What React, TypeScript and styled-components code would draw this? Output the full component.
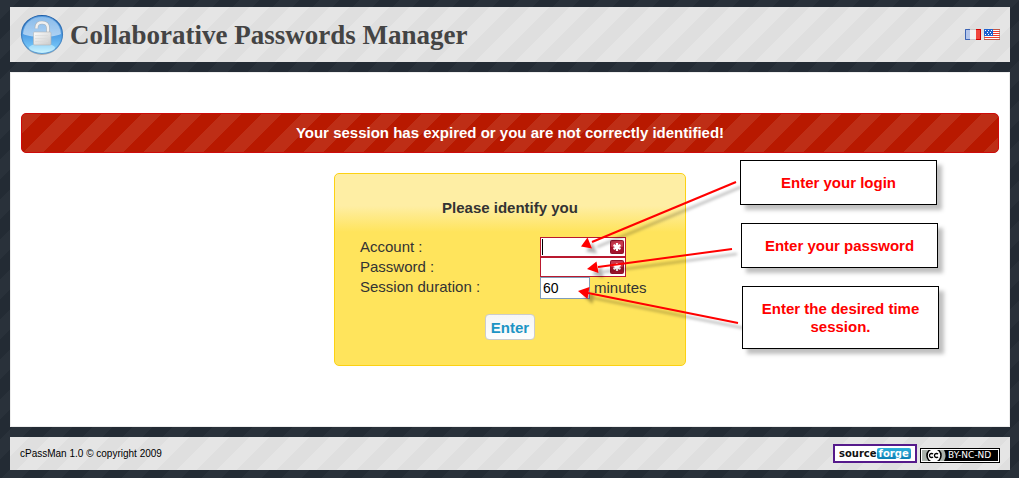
import React from "react";
import styled, { createGlobalStyle, css } from "styled-components";

const stripes = (base: string, band: string) => css`
  background-color: ${base};
  background-image: linear-gradient(
    135deg,
    ${band} 25%,
    ${base} 25%,
    ${base} 50%,
    ${band} 50%,
    ${band} 75%,
    ${base} 75%
  );
  background-size: 40px 40px;
`;

const GlobalStyle = createGlobalStyle`
  * { box-sizing: border-box; }
  html { min-height: 100%; ${stripes("#232b34", "#29313a")} }
  body {
    margin: 0;
    font-family: "Liberation Sans", Arial, sans-serif;
    font-size: 15px;
    line-height: 20px;
    color: #333;
  }
`;

const Page = styled.div`
  display: flex;
  flex-direction: column;
  gap: 10px;
  padding: 7px 9px 8px 10px;
`;

const Bar = styled.div`
  ${stripes("#dfdfdf", "#e5e5e5")}
  display: flex;
  align-items: center;
  justify-content: space-between;
  padding: 0 10px;
`;

const Header = styled(Bar).attrs({ as: "header" })`
  min-height: 55px;
`;

const Footer = styled(Bar).attrs({ as: "footer" })`
  min-height: 33px;
  color: #000;
  font-size: 10px;
`;

const Brand = styled.div`
  display: flex;
  align-items: center;
  gap: 6px;
`;

const Title = styled.h1`
  margin: 0;
  font: bold 27px/32px "Liberation Serif", "Times New Roman", serif;
  color: #444;
`;

const Flags = styled.nav`
  display: flex;
  gap: 3px;
`;

const FlagLink = styled.a`
  display: block;
  height: 11px;
  svg { display: block; }
`;

const Main = styled.main`
  display: flex;
  flex-direction: column;
  align-items: center;
  gap: 20px;
  padding: 40px 10px 60px;
  border: 1px solid #eee;
  background: #fff;
`;

const Alert = styled.div`
  ${stripes("#b81900", "#be2e16")}
  align-self: stretch;
  padding: 9px;
  border: 1px solid #cd0a0a;
  border-radius: 5px;
  color: #fff;
  font-weight: bold;
  text-align: center;
`;

const Stage = styled.div`
  position: relative;
  width: 352px;
`;

const Card = styled.form`
  display: flex;
  flex-direction: column;
  align-items: center;
  padding: 24px 25px 25px;
  border: 1px solid #fcd113;
  border-radius: 5px;
  background: linear-gradient(#feeea4 0, #feeea4 32px, #ffe45c 58px, #ffe45c 100%);
`;

const CardTitle = styled.h2`
  margin: 0 0 19px;
  font-size: 15px;
  line-height: 20px;
`;

const Fields = styled.div`
  align-self: stretch;
  display: grid;
  grid-template-columns: 180px 1fr;
`;

const Field = styled.div`
  display: flex;
  align-items: center;
  gap: 4px;
  position: relative;
`;

const TextInput = styled.input<{ $required?: boolean; $caret?: boolean }>`
  width: ${(p) => (p.$required ? 86 : 50)}px;
  height: ${(p) => (p.$required ? 20 : 22)}px;
  padding: 0 2px;
  border: 1px solid ${(p) => (p.$required ? "#b9192f" : "#7f9db9")};
  outline: 0;
  background: ${(p) =>
    p.$caret ? "linear-gradient(#000, #000) 1px 1px / 1px 16px no-repeat #fff" : "#fff"};
  color: #000;
  font: 14px "Liberation Sans", Arial, sans-serif;
`;

const RequiredIcon = styled.svg`
  position: absolute;
  left: 70px;
  top: 3px;
`;

const EnterButton = styled.button`
  height: 26px;
  margin-top: 15px;
  padding: 0 5px;
  border: 1px solid #ccc;
  border-radius: 4px;
  background: linear-gradient(#f6f6f6, #fdfdfd);
  color: #1c94c4;
  font: bold 15px "Liberation Sans", Arial, sans-serif;
`;

const Callout = styled.div<{ $x: number; $y: number; $tall?: boolean }>`
  position: absolute;
  left: ${(p) => p.$x}px;
  top: ${(p) => p.$y}px;
  display: flex;
  align-items: center;
  justify-content: center;
  width: 197px;
  height: ${(p) => (p.$tall ? 63 : 45)}px;
  padding: 0 10px;
  border: 1px solid #000;
  background: #fff;
  box-shadow: 5px 5px 4px rgba(0, 0, 0, 0.25);
  color: #f00;
  font-weight: bold;
  line-height: 18px;
  text-align: center;
`;

const Arrows = styled.svg`
  position: absolute;
  left: 200px;
  top: 0;
  pointer-events: none;
`;

const Badges = styled.div`
  display: flex;
  align-items: flex-end;
  gap: 3px;
`;

const ForgeBadge = styled.a`
  display: flex;
  align-items: center;
  width: 84px;
  height: 19px;
  padding-left: 4px;
  border: 2px solid #551a8b;
  background: #fff;
  color: #111;
  font: bold 10px/11px "DejaVu Sans", sans-serif;
  text-decoration: none;
`;

const ForgeTail = styled.span`
  padding: 0 2px;
  border-radius: 2px;
  background: linear-gradient(#2fb0dc, #0c7fb5);
  color: #fff;
`;

const LicenseBadge = styled.a`
  display: flex;
  align-items: center;
  width: 80px;
  height: 15px;
  border: 1px solid #000;
  outline: 1px solid #fff;
  outline-offset: -2px;
  background: #000;
  color: #fff;
  font: 9px/11px "DejaVu Sans", sans-serif;
  text-decoration: none;
  svg { flex: none; margin: 0 1px; }
`;

const Lock = () => (
  <svg width="44" height="42" viewBox="0 0 44 42" aria-hidden="true">
    <defs>
      <linearGradient id="ball" x1="0" y1="0" x2="0" y2="1">
        <stop offset="0" stopColor="#5b9fe0" />
        <stop offset=".5" stopColor="#4f9ce4" />
        <stop offset=".8" stopColor="#6fc0f5" />
        <stop offset="1" stopColor="#c6f4ff" />
      </linearGradient>
      <linearGradient id="rim" x1="0" y1="0" x2="0" y2="1">
        <stop offset="0" stopColor="#1f5ea8" />
        <stop offset="1" stopColor="#5d9fd6" />
      </linearGradient>
      <linearGradient id="gloss" x1="0" y1="0" x2="0" y2="1">
        <stop offset="0" stopColor="#fff" stopOpacity=".3" />
        <stop offset="1" stopColor="#fff" stopOpacity=".55" />
      </linearGradient>
      <linearGradient id="metal" x1="0" y1="0" x2="1" y2="1">
        <stop offset="0" stopColor="#fcfcfc" />
        <stop offset="1" stopColor="#cacaca" />
      </linearGradient>
    </defs>
    <ellipse cx="22" cy="22" rx="20" ry="19" fill="#777" opacity=".5" />
    <ellipse cx="22" cy="20.5" rx="20.5" ry="19" fill="url(#ball)" stroke="url(#rim)" strokeWidth="1.2" />
    <ellipse cx="22" cy="34" rx="13" ry="4.500" fill="#d4f6ff" opacity=".55" />
    <path d="M3 20C4 9 12 3 22 3s18 6 19 17c-8 4-30 4-38 0Z" fill="url(#gloss)" />
    <path d="M16.500 14.500v-1C16.500 10 18.500 8.500 22 8.500s6 1.500 6 5.500v5" fill="none" stroke="#a5b0bb" strokeWidth="3.600" />
    <path d="M16.500 14.500v-1C16.500 10 18.500 8.500 22 8.500s6 1.500 6 5.500v5" fill="none" stroke="#f0f0f0" strokeWidth="2.400" />
    <rect x="13.500" y="18" width="17.500" height="13" rx="1" fill="url(#metal)" stroke="#b4b4b4" strokeWidth=".6" />
    <path d="M15 21.500h13M15 24.500h13M15 27.500h13" stroke="#dadada" strokeWidth=".7" />
  </svg>
);

const FrenchFlag = () => (
  <svg width="16" height="11" viewBox="0 0 16 11" aria-hidden="true">
    <path fill="#7b9bdb" d="M0 0h5v11H0z" />
    <path fill="#b5c6ea" d="M1 1h4v9H1z" />
    <path fill="#f3f3f3" d="M5 0h6v11H5z" />
    <path fill="#c9c9c9" d="M5 0h6v1H5zM5 10h6v1H5z" />
    <path fill="#d40000" d="M11 0h5v11h-5z" />
    <path fill="#f1483f" d="M11 1h4v9h-4z" />
    <path fill="none" stroke="#3d64b4" d="M5 .5H.5v10H5" />
  </svg>
);

const AmericanFlag = () => (
  <svg width="16" height="11" viewBox="0 0 16 11" aria-hidden="true">
    <path fill="#fff" d="M0 0h16v11H0z" />
    <path fill="#ee3b2e" d="M0 0h16v1H0zM0 2h16v1H0zM0 4h16v1H0zM0 6h16v1H0zM0 8h16v1H0zM0 10h16v1H0z" />
    <path fill="#1f62d0" d="M0 0h9v7H0z" />
    <path
      stroke="#fff"
      strokeDasharray="1 2"
      d="M1 1.500h7M3 3.500h5M1 5.500h7"
    />
    <path fill="none" stroke="#a06a58" strokeOpacity=".6" d="M9 .5h6.500v10H.5V7" />
  </svg>
);

const Required = () => (
  <RequiredIcon width="14" height="14" viewBox="0 0 14 14" aria-hidden="true">
    <rect width="14" height="14" rx="2" fill="#93122a" />
    <rect x="1" y="1" width="12" height="6" rx="1" fill="#c8384c" />
    <rect x="1" y="7" width="12" height="6" rx="1" fill="#a5142c" />
    <path d="M7 3v8M3.500 5l7 4M10.500 5l-7 4" stroke="#fff" strokeWidth="2.200" />
  </RequiredIcon>
);

const arrows = [
  { line: "M202 9L58 69", head: "M47 73.500L53.500 64.500L58 75.500Z" },
  { line: "M198 76L64 94", head: "M53 96L62.500 88.500L64.500 100Z" },
  { line: "M204 150L54 120", head: "M44 118L55.500 114L53.500 126Z" },
];

const ArrowLayer = () => (
  <Arrows width="216" height="180" viewBox="0 0 216 180" aria-hidden="true">
    <defs>
      <filter id="shade" x="-10%" y="-30%" width="130%" height="180%">
        <feDropShadow dx="5" dy="5" stdDeviation="1.5" floodColor="#000" floodOpacity=".3" />
      </filter>
    </defs>
    {arrows.map((a) => (
      <g key={a.line} filter="url(#shade)">
        <path d={a.line} stroke="#f00" strokeWidth="2" />
        <path d={a.head} fill="#f00" />
      </g>
    ))}
  </Arrows>
);

export default function App() {
  return (
    <>
      <GlobalStyle />
      <Page>
        <Header>
          <Brand>
            <Lock />
            <Title>Collaborative Passwords Manager</Title>
          </Brand>
          <Flags aria-label="Language">
            <FlagLink href="#fr" aria-label="Français"><FrenchFlag /></FlagLink>
            <FlagLink href="#en" aria-label="English"><AmericanFlag /></FlagLink>
          </Flags>
        </Header>

        <Main>
          <Alert role="alert">Your session has expired or you are not correctly identified!</Alert>
          <Stage>
            <Card onSubmit={(e) => e.preventDefault()}>
              <CardTitle>Please identify you</CardTitle>
              <Fields>
                <label htmlFor="account">Account :</label>
                <Field>
                  <TextInput id="account" type="text" $required $caret />
                  <Required />
                </Field>
                <label htmlFor="password">Password :</label>
                <Field>
                  <TextInput id="password" type="password" $required />
                  <Required />
                </Field>
                <label htmlFor="duration">Session duration :</label>
                <Field>
                  <TextInput id="duration" type="text" defaultValue="60" />
                  <span>minutes</span>
                </Field>
              </Fields>
              <EnterButton type="submit">Enter</EnterButton>
            </Card>
            <ArrowLayer />
            <Callout $x={406} $y={-13}>Enter your login</Callout>
            <Callout $x={407} $y={50}>Enter your password</Callout>
            <Callout $x={408} $y={113} $tall>Enter the desired time session.</Callout>
          </Stage>
        </Main>

        <Footer>
          <span>cPassMan 1.0 © copyright 2009</span>
          <Badges>
            <ForgeBadge href="#sourceforge">
              source<ForgeTail>forge</ForgeTail>
            </ForgeBadge>
            <LicenseBadge href="#license">
              <svg width="25" height="11" viewBox="0 0 25 11" aria-hidden="true">
                <path fill="#aab2ab" d="M0 0h22q3 5.500 0 11H0z" />
                <circle cx="12" cy="5.500" r="7" fill="#fff" stroke="#000" strokeWidth="1.600" />
                <path
                  d="M11 4.200a2 2 0 1 0 0 2.600M16 4.200a2 2 0 1 0 0 2.600"
                  fill="none"
                  stroke="#000"
                  strokeWidth="1.300"
                />
              </svg>
              BY-NC-ND
            </LicenseBadge>
          </Badges>
        </Footer>
      </Page>
    </>
  );
}
